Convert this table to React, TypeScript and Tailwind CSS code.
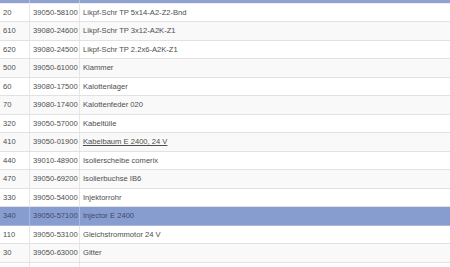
const rows: { pos: string; nr: string; name: string; link?: boolean }[] = [
  { pos: '20', nr: '39050-58100', name: 'Likpf-Schr TP 5x14-A2-Z2-Bnd' },
  { pos: '610', nr: '39080-24600', name: 'Likpf-Schr TP 3x12-A2K-Z1' },
  { pos: '620', nr: '39080-24500', name: 'Likpf-Schr TP 2.2x6-A2K-Z1' },
  { pos: '500', nr: '39050-61000', name: 'Klammer' },
  { pos: '60', nr: '39080-17500', name: 'Kalottenlager' },
  { pos: '70', nr: '39080-17400', name: 'Kalottenfeder 020' },
  { pos: '320', nr: '39050-57000', name: 'Kabeltülle' },
  { pos: '410', nr: '39050-01900', name: 'Kabelbaum E 2400, 24 V', link: true },
  { pos: '440', nr: '39010-48900', name: 'Isolierscheibe comerix' },
  { pos: '470', nr: '39050-69200', name: 'Isolierbuchse IB6' },
  { pos: '330', nr: '39050-54000', name: 'Injektorrohr' },
  { pos: '340', nr: '39050-57100', name: 'Injector E 2400' },
  { pos: '110', nr: '39050-53100', name: 'Gleichstrommotor 24 V' },
  { pos: '30', nr: '39050-63000', name: 'Gitter' },
  // next row only peeks in at the bottom edge
  { pos: '', nr: '', name: '' },
];

const SELECTED = 11;

export default function App() {
  return (
    <div
      className="w-[450px] h-[267px] overflow-hidden bg-white text-[7.6px] text-[#4d4d4d]"
      style={{ fontFamily: '"Liberation Sans", Arial, sans-serif' }}
    >
      {/* header strip */}
      <div className="flex h-[3.5px] bg-[#8ea1d4] border-b border-[#f3efe6]">
        <div className="w-[30px] border-r border-[#b3c0e4]" />
        <div className="w-[50px] border-r border-[#b3c0e4]" />
        <div className="flex-1" />
      </div>

      {rows.map((r, i) => {
        const sel = i === SELECTED;
        const bg = sel ? 'bg-[#879dd0]' : i % 2 === 0 ? 'bg-white' : 'bg-[#f9f9f9]';
        const divider = sel ? 'border-[#a7b5e0]' : 'border-[#e6e6e6]';
        return (
          <div
            key={i}
            className={`flex h-[18.5px] items-center border-b ${sel ? 'border-[#a9b6dd] text-[#3f4a6a]' : 'border-[#e2e2e2]'} ${bg}`}
          >
            <div className={`w-[30px] h-full flex items-center pl-[3px] border-r ${divider}`}>{r.pos}</div>
            <div className={`w-[50px] h-full flex items-center pl-[3px] border-r ${divider}`}>{r.nr}</div>
            <div className="flex-1 h-full flex items-center pl-[3px]">
              {r.link ? <span className="underline">{r.name}</span> : r.name}
            </div>
          </div>
        );
      })}
    </div>
  );
}
